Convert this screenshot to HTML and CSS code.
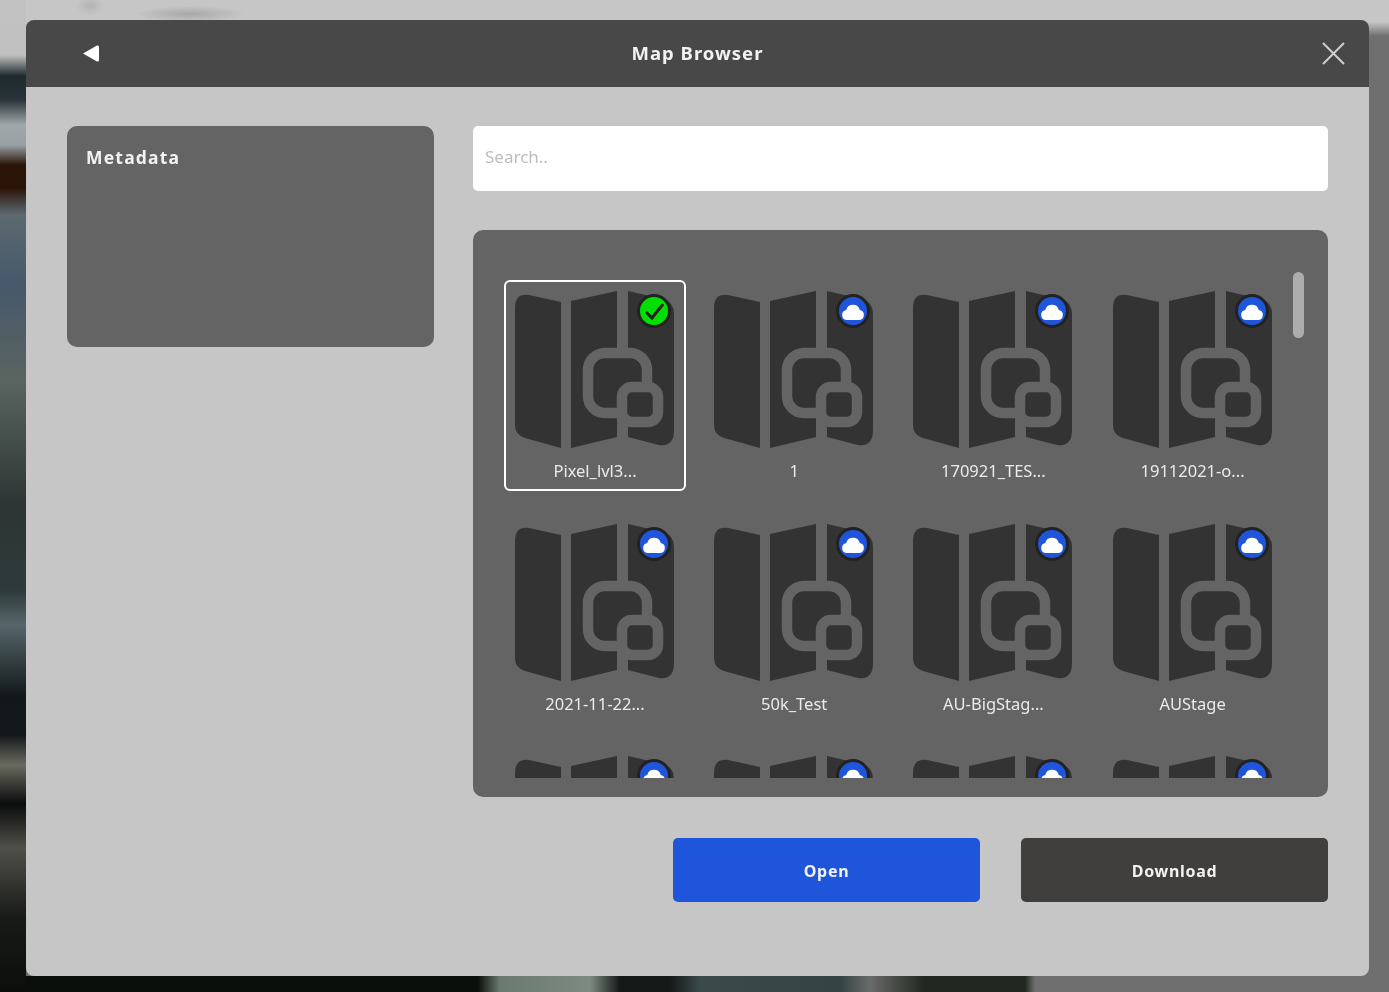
FILE: index.html
```html
<!DOCTYPE html>
<html lang="en">
<head>
  <meta charset="UTF-8" />
  <title>Map Browser</title>
  <link rel="stylesheet" href="styles.css">
</head>
<body>
  <svg class="defs" width="0" height="0">
    <symbol id="map" viewBox="0 0 160 160">
      <path class="sheet" d="M0 18Q0 3 14 5L46 12V158L10 148Q0 145 0 135Z" />
      <path class="sheet" d="M56 11L102 1V147L56 158Z" />
      <path class="sheet" d="M113 1L148 9Q159 12 159 24V140Q159 157 144 155L113 147Z" />
      <rect class="cut sheet" x="73" y="63" width="59" height="60" rx="17" />
      <rect class="cut sheet" x="107" y="97" width="36" height="35" rx="10" />
    </symbol>
    <symbol id="cloud" viewBox="0 0 34 34">
      <circle class="disc-cloud" cx="17" cy="17" r="15.500" />
      <path class="puff" d="M11 26A5 5 0 0 1 10.200 16.100A7 7 0 0 1 23.800 16.100A5 5 0 0 1 23 26Z" />
    </symbol>
    <symbol id="check" viewBox="0 0 34 34">
      <circle class="disc-check" cx="17" cy="17" r="15.500" />
      <path class="tick" d="M9 18L15 24L26 10" />
    </symbol>
  </svg>

  <div class="dialog">
    <header class="topbar">
      <button class="back" aria-label="Back">
        <svg width="18" height="18" viewBox="0 0 18 18"><path d="M1 9.500L15 1.500Q17 1 17 3V16Q17 18 15 17.500Z" /></svg>
      </button>
      <h1>Map Browser</h1>
      <button class="close" aria-label="Close">
        <svg width="24" height="24" viewBox="0 0 24 24"><path d="M2 2L23 23M23 2L2 23" /></svg>
      </button>
    </header>

    <div class="content">
      <aside class="metadata">
        <h2>Metadata</h2>
      </aside>

      <main class="browser">
        <input class="search" type="text" placeholder="Search.." />

        <div class="maps">
          <div class="maps-scroll">
            <div class="map selected">
              <svg class="map-icon"><use href="#map" /></svg>
              <svg class="badge"><use href="#check" /></svg>
              <span>Pixel_lvl3...</span>
            </div>
            <div class="map">
              <svg class="map-icon"><use href="#map" /></svg>
              <svg class="badge"><use href="#cloud" /></svg>
              <span>1</span>
            </div>
            <div class="map">
              <svg class="map-icon"><use href="#map" /></svg>
              <svg class="badge"><use href="#cloud" /></svg>
              <span>170921_TES...</span>
            </div>
            <div class="map">
              <svg class="map-icon"><use href="#map" /></svg>
              <svg class="badge"><use href="#cloud" /></svg>
              <span>19112021-o...</span>
            </div>
            <div class="map">
              <svg class="map-icon"><use href="#map" /></svg>
              <svg class="badge"><use href="#cloud" /></svg>
              <span>2021-11-22...</span>
            </div>
            <div class="map">
              <svg class="map-icon"><use href="#map" /></svg>
              <svg class="badge"><use href="#cloud" /></svg>
              <span>50k_Test</span>
            </div>
            <div class="map">
              <svg class="map-icon"><use href="#map" /></svg>
              <svg class="badge"><use href="#cloud" /></svg>
              <span>AU-BigStag...</span>
            </div>
            <div class="map">
              <svg class="map-icon"><use href="#map" /></svg>
              <svg class="badge"><use href="#cloud" /></svg>
              <span>AUStage</span>
            </div>
            <div class="map">
              <svg class="map-icon"><use href="#map" /></svg>
              <svg class="badge"><use href="#cloud" /></svg>
            </div>
            <div class="map">
              <svg class="map-icon"><use href="#map" /></svg>
              <svg class="badge"><use href="#cloud" /></svg>
            </div>
            <div class="map">
              <svg class="map-icon"><use href="#map" /></svg>
              <svg class="badge"><use href="#cloud" /></svg>
            </div>
            <div class="map">
              <svg class="map-icon"><use href="#map" /></svg>
              <svg class="badge"><use href="#cloud" /></svg>
            </div>
          </div>
          <div class="scrollbar"></div>
        </div>

        <div class="actions">
          <button class="btn btn-open">Open</button>
          <button class="btn btn-download">Download</button>
        </div>
      </main>
    </div>
  </div>
</body>
</html>
```

FILE: styles.css
```css
* {
  box-sizing: border-box;
}
html, body {
  height: 100%;
}
body {
  margin: 0;
  padding: 20px 20px 16px 26px;
  overflow: hidden;
  font-family: "Noto Sans", "Open Sans", sans-serif;
  background-color: #6f6f6f;
  background-image:
    radial-gradient(ellipse 55px 8px at 190px 14px, #a8a8a8, transparent),
    radial-gradient(ellipse 14px 10px at 90px 6px, #b4b4b4, transparent),
    linear-gradient(180deg, #c2c2c2 0, #c0c0c0 55px, #1d2a2e 76px, #2a3438 100px, #a0a8ac 125px, #98a0a4 145px, #2a1408 165px, #2a1408 188px, #5c6a70 215px, #46586a 285px, #5a6460 380px, #2c3533 506px, #2e3a3a 590px, #56666a 625px, #12181a 696px, #14181a 735px, #6a6a60 765px, #0a0c0c 804px, #50504a 848px, #181a18 918px, #0c0e0c 992px),
    linear-gradient(90deg, #0a0f0c 0, #0a0f0c 478px, #6b7a70 500px, #7c8a80 590px, #141a18 620px, #141a18 670px, #3a4a4a 700px, #344444 840px, #6a6a6a 870px, #20281f 925px, #20281f 1025px, #6f6f6f 1035px),
    linear-gradient(180deg, #c6c6c6 0, #c6c6c6 22px, #6f6f6f 36px);
  background-size: 100% 100%, 100% 100%, 26px 100%, 100% 16px, 100% 100%;
  background-position: left top, left top, left top, left bottom, left top;
  background-repeat: no-repeat;
}
.defs {
  position: absolute;
}
.sheet {
  fill: #333333;
}
.cut {
  stroke: #646464;
  stroke-width: 10.500;
}
.disc-cloud, .disc-check {
  stroke: #222222;
  stroke-width: 3;
}
.disc-cloud {
  fill: #1f55db;
}
.disc-check {
  fill: #00e000;
}
.puff {
  fill: #ffffff;
}
.tick {
  fill: none;
  stroke: #222222;
  stroke-width: 3;
}

.dialog {
  height: 100%;
  display: flex;
  flex-direction: column;
  background-color: #c6c6c6;
  border-radius: 8px;
  overflow: hidden;
  filter: blur(0.5px);
}
.topbar {
  height: 67px;
  flex: none;
  display: grid;
  grid-template-columns: 1fr auto 1fr;
  align-items: center;
  padding: 0 24px;
  background-color: #484848;
}
.topbar h1 {
  margin: 0 0 2px;
  font-size: 18.500px;
  font-weight: 700;
  letter-spacing: 1px;
  color: #f2f2f2;
}
.back, .close {
  padding: 0;
  border: none;
  background: none;
  line-height: 0;
}
.back {
  justify-self: start;
  margin: 0 0 2px 32px;
}
.back path {
  fill: #ffffff;
}
.close {
  justify-self: end;
  margin-bottom: 2px;
}
.close path {
  fill: none;
  stroke: #cfcfcf;
  stroke-width: 2;
}

.content {
  display: flex;
  gap: 39px;
  padding: 39px 41px 0 41px;
}
.metadata {
  width: 367px;
  height: 221px;
  flex: none;
  padding: 20px 19px;
  background-color: #646464;
  border-radius: 10px;
}
.metadata h2 {
  margin: 0;
  font-size: 17.500px;
  line-height: 22px;
  font-weight: 700;
  letter-spacing: 1.200px;
  color: #f2f2f2;
}
.browser {
  width: 855px;
  flex: none;
}
.search {
  display: block;
  width: 100%;
  height: 65px;
  padding: 0 12px 4px;
  border: none;
  border-radius: 5px;
  background-color: #ffffff;
  font-family: inherit;
  font-size: 17px;
}
.search::placeholder {
  color: #bdbdbd;
  opacity: 1;
}
.maps {
  position: relative;
  height: 567px;
  margin-top: 39px;
  padding: 20px 0 19px 31px;
  background-color: #646464;
  border-radius: 10px;
}
.maps-scroll {
  height: 100%;
  padding-top: 30px;
  overflow: hidden;
  display: grid;
  grid-template-columns: repeat(4, 182px);
  grid-auto-rows: 211px;
  column-gap: 17.200px;
  row-gap: 21.500px;
}
.map {
  position: relative;
  display: flex;
  flex-direction: column;
  align-items: center;
  padding-top: 8px;
  border: 2px solid transparent;
  border-radius: 6px;
  color: #eaeaea;
  font-size: 16.500px;
}
.map.selected {
  border-color: #ffffff;
}
.map-icon {
  width: 160px;
  height: 160px;
  flex: none;
}
.map span {
  margin-top: 9px;
  line-height: 24px;
}
.badge {
  position: absolute;
  top: 12px;
  left: 131px;
  width: 34px;
  height: 34px;
}
.scrollbar {
  position: absolute;
  top: 42px;
  right: 24px;
  width: 11px;
  height: 66px;
  background-color: #adadad;
  border-radius: 6px;
}
.actions {
  display: flex;
  justify-content: flex-end;
  gap: 41px;
  margin-top: 41px;
}
.btn {
  width: 307px;
  height: 64px;
  padding-top: 2px;
  border: none;
  border-radius: 5px;
  font-family: inherit;
  font-size: 16px;
  font-weight: 700;
  letter-spacing: 0.700px;
  color: #f2f2f2;
}
.btn-open {
  background-color: #1f55db;
}
.btn-download {
  background-color: #403f3d;
}
```
